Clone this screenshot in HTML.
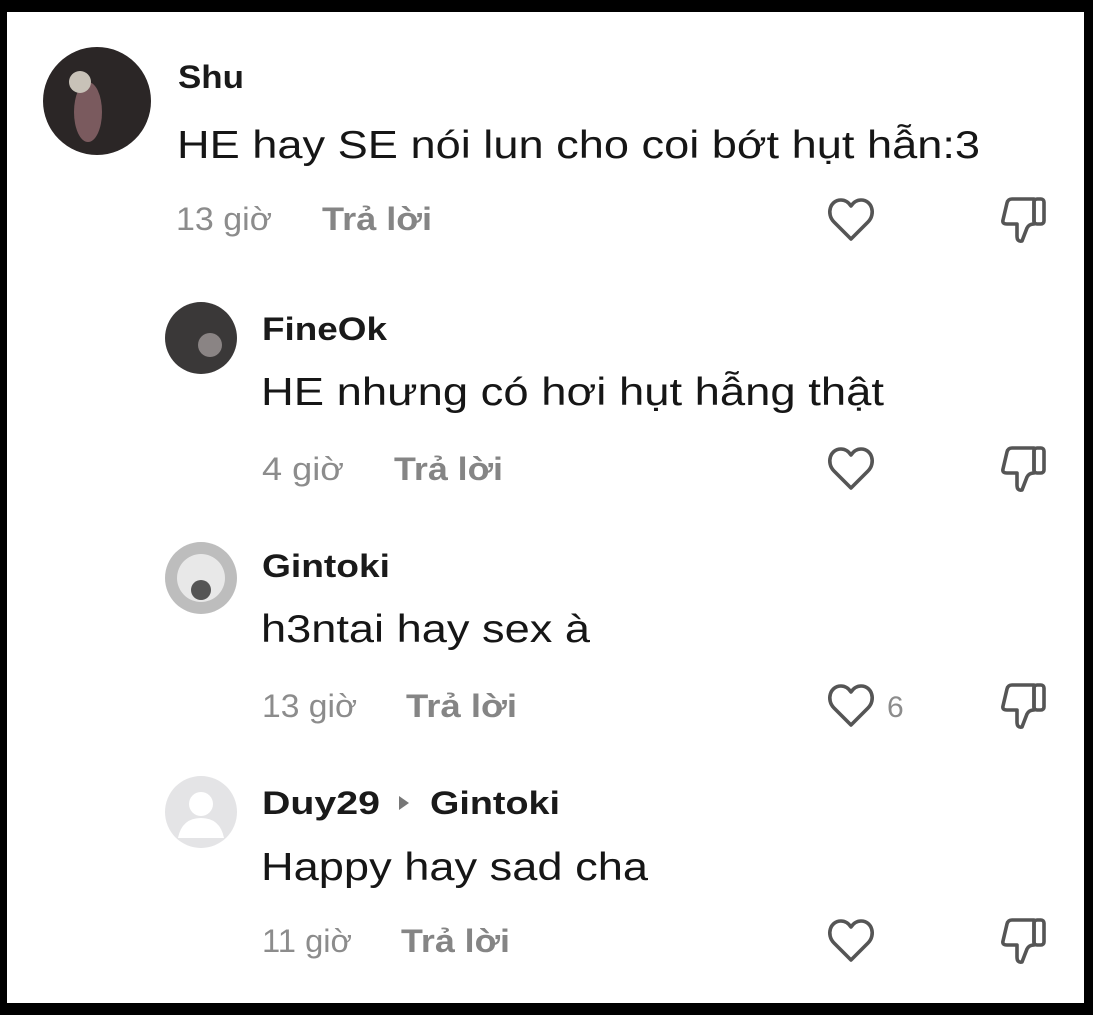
<!DOCTYPE html>
<html><head><meta charset="utf-8"><style>
html,body{margin:0;padding:0;background:#000;}
svg{display:block;}
text{font-family:"Liberation Sans",sans-serif;}
.n{font-size:32px;font-weight:bold;fill:#1a1a1a;}
.t{font-size:39px;fill:#161616;}
.m{font-size:32px;fill:#8c8c8c;}
.r{font-size:32px;font-weight:bold;fill:#858585;}
.ic{fill:none;stroke:#555;stroke-width:3.6;stroke-linejoin:round;stroke-linecap:round;}
</style></head><body>
<svg width="1093" height="1015" viewBox="0 0 1093 1015" xmlns="http://www.w3.org/2000/svg">
<defs>
<g id="heart"><path class="ic" d="M24 42 L7 25 C-1 17 3 3 14 3 C19 3 22 6 24 9 C26 6 29 3 34 3 C45 3 49 17 41 25 Z"/></g>
<g id="dis"><path class="ic" d="M33 2 H11 Q7 2 6 6 L2 23 Q1 27 6 27 H16 V39 Q16 45 21 44 L26 31 Q28 27 33 27 Z"/><rect class="ic" x="33" y="2" width="10" height="25" rx="3"/></g>
</defs>
<rect x="0" y="0" width="1093" height="1015" fill="#000"/>
<rect x="7" y="12" width="1077" height="991" fill="#fff"/>

<!-- comment 1 -->
<circle cx="97" cy="101" r="54" fill="#2b2626"/>
<ellipse cx="88" cy="112" rx="14" ry="30" fill="#7a5a5e"/>
<circle cx="80" cy="82" r="11" fill="#c8c2b8"/>
<text class="n" x="178" y="88" textLength="66" lengthAdjust="spacingAndGlyphs">Shu</text>
<text class="t" x="177" y="158" textLength="803" lengthAdjust="spacingAndGlyphs">HE hay SE nói lun cho coi bớt hụt hẫn:3</text>
<text class="m" x="176" y="230" textLength="96" lengthAdjust="spacingAndGlyphs">13 giờ</text>
<text class="r" x="322" y="230" textLength="110" lengthAdjust="spacingAndGlyphs">Trả lời</text>
<use href="#heart" x="827" y="197"/>
<use href="#dis" x="1001" y="197"/>

<!-- reply 1 -->
<circle cx="201" cy="338" r="36" fill="#3a3838"/>
<circle cx="210" cy="345" r="12" fill="#8a8484"/>
<text class="n" x="262" y="340" textLength="125" lengthAdjust="spacingAndGlyphs">FineOk</text>
<text class="t" x="261" y="405" textLength="623" lengthAdjust="spacingAndGlyphs">HE nhưng có hơi hụt hẫng thật</text>
<text class="m" x="262" y="480" textLength="82" lengthAdjust="spacingAndGlyphs">4 giờ</text>
<text class="r" x="394" y="480" textLength="109" lengthAdjust="spacingAndGlyphs">Trả lời</text>
<use href="#heart" x="827" y="446"/>
<use href="#dis" x="1001" y="446"/>

<!-- reply 2 -->
<circle cx="201" cy="578" r="36" fill="#bdbdbd"/>
<circle cx="201" cy="578" r="24" fill="#e8e8e8"/>
<circle cx="201" cy="590" r="10" fill="#555"/>
<text class="n" x="262" y="577" textLength="128" lengthAdjust="spacingAndGlyphs">Gintoki</text>
<text class="t" x="261" y="642" textLength="329" lengthAdjust="spacingAndGlyphs">h3ntai hay sex à</text>
<text class="m" x="262" y="717" textLength="95" lengthAdjust="spacingAndGlyphs">13 giờ</text>
<text class="r" x="406" y="717" textLength="111" lengthAdjust="spacingAndGlyphs">Trả lời</text>
<use href="#heart" x="827" y="683"/>
<text class="m" x="887" y="717" style="font-size:30px">6</text>
<use href="#dis" x="1001" y="683"/>

<!-- reply 3 -->
<circle cx="201" cy="812" r="36" fill="#e4e4e6"/>
<circle cx="201" cy="804" r="12" fill="#fff"/>
<path d="M178 838 Q182 818 201 818 Q220 818 224 838 Z" fill="#fff"/>
<text class="n" x="262" y="814" textLength="118" lengthAdjust="spacingAndGlyphs">Duy29</text>
<path d="M399 796 L409 803 L399 810 Z" fill="#777"/>
<text class="n" x="430" y="814" textLength="130" lengthAdjust="spacingAndGlyphs">Gintoki</text>
<text class="t" x="261" y="880" textLength="387" lengthAdjust="spacingAndGlyphs">Happy hay sad cha</text>
<text class="m" x="262" y="952" textLength="90" lengthAdjust="spacingAndGlyphs">11 giờ</text>
<text class="r" x="401" y="952" textLength="109" lengthAdjust="spacingAndGlyphs">Trả lời</text>
<use href="#heart" x="827" y="918"/>
<use href="#dis" x="1001" y="918"/>
</svg>
</body></html>
